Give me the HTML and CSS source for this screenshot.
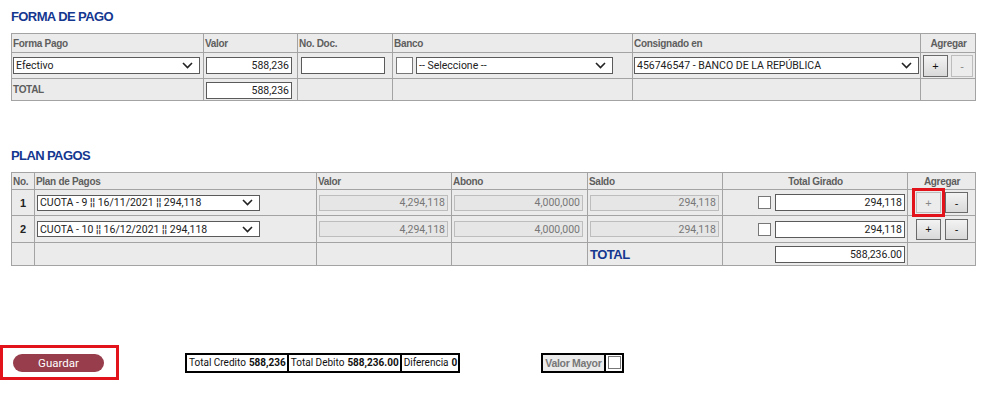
FILE: index.html
```html
<!DOCTYPE html>
<html lang="es">
<head>
<meta charset="utf-8">
<title>Forma de pago</title>
<link rel="stylesheet" href="styles.css">
</head>
<body>
<div class="page">
  <h2 class="title t1">FORMA DE PAGO</h2>
  <table class="grid g1">
    <colgroup>
      <col style="width:192px"><col style="width:94px"><col style="width:95px"><col style="width:240px"><col style="width:288px"><col style="width:55px">
    </colgroup>
    <tr class="hd">
      <th>Forma Pago</th><th>Valor</th><th>No. Doc.</th><th>Banco</th><th>Consignado en</th><th class="c">Agregar</th>
    </tr>
    <tr class="r1">
      <td><div class="sel w187"><span>Efectivo</span><svg width="11" height="7" viewBox="0 0 11 7"><path d="M1 1l4.5 4.5L10 1" fill="none" stroke="#222" stroke-width="1.6"/></svg></div></td>
      <td><input class="inp w85" value="588,236"></td>
      <td><input class="inp w83 left" value=""></td>
      <td><div class="bank"><span class="sq"></span><div class="sel w196"><span>-- Seleccione --</span><svg width="11" height="7" viewBox="0 0 11 7"><path d="M1 1l4.5 4.5L10 1" fill="none" stroke="#222" stroke-width="1.6"/></svg></div></div></td>
      <td><div class="sel w284"><span>456746547 - BANCO DE LA REPÚBLICA</span><svg width="11" height="7" viewBox="0 0 11 7"><path d="M1 1l4.5 4.5L10 1" fill="none" stroke="#222" stroke-width="1.6"/></svg></div></td>
      <td><div class="btns b1"><button class="btn">+</button><button class="btn dis">-</button></div></td>
    </tr>
    <tr class="tot">
      <th>TOTAL</th>
      <td><input class="inp w85" value="588,236"></td>
      <td></td><td></td><td></td><td></td>
    </tr>
  </table>

  <h2 class="title t2">PLAN PAGOS</h2>
  <table class="grid g2">
    <colgroup>
      <col style="width:23px"><col style="width:282px"><col style="width:135px"><col style="width:136px"><col style="width:135px"><col style="width:185px"><col style="width:68px">
    </colgroup>
    <tr class="hd">
      <th>No.</th><th>Plan de Pagos</th><th>Valor</th><th>Abono</th><th>Saldo</th><th class="c">Total Girado</th><th class="c">Agregar</th>
    </tr>
    <tr class="pr">
      <td class="num">1</td>
      <td><div class="sel w222"><span>CUOTA - 9 ¦¦ 16/11/2021 ¦¦ 294,118</span><svg width="11" height="7" viewBox="0 0 11 7"><path d="M1 1l4.5 4.5L10 1" fill="none" stroke="#222" stroke-width="1.6"/></svg></div></td>
      <td><input class="inp ro w128" value="4,294,118" readonly></td>
      <td><input class="inp ro w128" value="4,000,000" readonly></td>
      <td><input class="inp ro w128" value="294,118" readonly></td>
      <td><div class="girado"><span class="sq sm"></span><input class="inp w130" value="294,118"></div></td>
      <td><div class="btns b2"><button class="btn dis hl">+</button><button class="btn">-</button></div></td>
    </tr>
    <tr class="pr">
      <td class="num">2</td>
      <td><div class="sel w222"><span>CUOTA - 10 ¦¦ 16/12/2021 ¦¦ 294,118</span><svg width="11" height="7" viewBox="0 0 11 7"><path d="M1 1l4.5 4.5L10 1" fill="none" stroke="#222" stroke-width="1.6"/></svg></div></td>
      <td><input class="inp ro w128" value="4,294,118" readonly></td>
      <td><input class="inp ro w128" value="4,000,000" readonly></td>
      <td><input class="inp ro w128" value="294,118" readonly></td>
      <td><div class="girado"><span class="sq sm"></span><input class="inp w130" value="294,118"></div></td>
      <td><div class="btns b2"><button class="btn">+</button><button class="btn">-</button></div></td>
    </tr>
    <tr class="tot2">
      <td></td><td></td><td></td><td></td>
      <td class="bigtot">TOTAL</td>
      <td><div class="girado"><input class="inp w130" value="588,236.00"></div></td>
      <td></td>
    </tr>
  </table>

  <div class="footer">
    <div class="mark"><button class="save">Guardar</button></div>
    <div class="sums">
      <span>Total Credito <b>588,236</b></span>
      <span>Total Debito <b>588,236.00</b></span>
      <span>Diferencia <b>0</b></span>
    </div>
    <div class="mayor"><span class="lbl">Valor Mayor</span><span class="sq cb"></span></div>
  </div>
</div>
</body>
</html>
```

FILE: styles.css
```css
* { box-sizing: border-box; }
body {
  margin: 0;
  background: #fff;
  font-family: Roboto, "Liberation Sans", Arial, sans-serif;
  font-size: 11px;
  color: #222;
}
.page { padding-left: 11px; width: 993px; }
.title {
  margin: 0;
  font-family: "Liberation Sans", Arial, sans-serif;
  font-weight: bold;
  font-size: 13px;
  line-height: 16px;
  letter-spacing: -0.6px;
  color: #143790;
}
.t1 { padding-top: 9px; }
.t2 { margin-top: 47px; }
.grid {
  margin-top: 8px;
  border-collapse: collapse;
  table-layout: fixed;
  width: 965px;
  background: #ebebeb;
}
.grid th, .grid td {
  border: 1px solid #a3a3a3;
  padding: 0 0 0 1px;
  text-align: left;
  vertical-align: middle;
}
.grid th {
  font-family: "Liberation Sans", Arial, sans-serif;
  font-weight: bold;
  font-size: 10px;
  color: #5e5e5e;
  letter-spacing: -0.3px;
}
.grid th.c { text-align: center; }
.g1 .hd { height: 19px; }
.g1 .r1 { height: 26px; }
.g1 .tot { height: 22px; }
.g2 .hd { height: 17px; }
.g2 .pr { height: 26px; }
.g2 .pr + .pr { height: 27px; }
.g2 .tot2 { height: 23px; }
.tot th { color: #5e5e5e; vertical-align: top; padding-top: 5px; }
.tot td { vertical-align: bottom; padding-bottom: 1px; }

.sel {
  display: flex;
  align-items: center;
  justify-content: space-between;
  height: 17px;
  border: 1px solid #5a5a5a;
  background: #fff;
  padding: 0 6px 0 2px;
  font-size: 10.5px;
  color: #222;
  white-space: nowrap;
}
.w187 { width: 187px; }
.w196 { width: 197px; }
.w284 { width: 285px; }
.w222 { width: 223px; margin-left: 1px; height: 16px; }
.bank { display: flex; align-items: center; gap: 3px; padding-left: 2px; }
.sq {
  display: inline-block;
  width: 17px;
  height: 17px;
  border: 1px solid #777;
  background: #fff;
}
.sq.sm { width: 13px; height: 13px; }
.inp {
  height: 17px;
  border: 1px solid #5a5a5a;
  background: #fff;
  font-family: Roboto, "Liberation Sans", Arial, sans-serif;
  font-size: 10.5px;
  color: #222;
  text-align: right;
  padding: 0 2px;
  margin: 0 0 0 1px;
  display: block;
}
.inp.left { text-align: left; margin-left: 2px; }
.w85 { width: 86px; }
.w83 { width: 84px; }
.w128 { width: 129px; margin-left: 1px; }
.w130 { width: 130px; }
.inp.ro {
  background: #e6e6e6;
  border: 1px solid #bdbdbd;
  color: #777;
  height: 16px;
}
.girado {
  display: flex;
  align-items: center;
  justify-content: flex-end;
  gap: 3px;
  padding-right: 2px;
}
.btns { display: flex; align-items: center; }
.btn {
  width: 25px;
  height: 22px;
  padding: 0;
  margin: 0;
  border: 1px solid #6a6a6a;
  border-radius: 0;
  background: linear-gradient(#f3f3f3, #d9d9d9);
  font-family: "Liberation Sans", Arial, sans-serif;
  font-size: 11px;
  color: #111;
}
.btn.dis {
  border-color: #bdbdbd;
  background: #ececec;
  color: #888;
}
.b1 { gap: 3px; padding-left: 1px; }
.b1 .btn { width: 25px; height: 22px; }
.b1 .btn.dis { width: 22px; }
.b2 { gap: 4px; padding-left: 7px; }
.b2 .btn { width: 25px; height: 21px; }
.b2 .btn + .btn { width: 23px; }
.btn.hl { outline: 3px solid #e3131b; outline-offset: 1px; }
.num {
  text-align: center !important;
  font-weight: bold;
  font-family: "Liberation Sans", Arial, sans-serif;
  font-size: 11px;
  padding: 0 !important;
}
.bigtot {
  font-family: "Liberation Sans", Arial, sans-serif;
  font-weight: bold;
  font-size: 13px;
  letter-spacing: -0.5px;
  color: #143790;
  padding-left: 2px !important;
}

.footer {
  margin-top: 79px;
  margin-left: -11px;
  display: flex;
  align-items: center;
}
.mark {
  width: 119px;
  height: 35px;
  border: 3px solid #e3131b;
  display: flex;
  align-items: center;
  padding-left: 10px;
}
.save {
  width: 91px;
  height: 18px;
  border: none;
  border-radius: 9px;
  background: #983d4c;
  color: #fff;
  font-family: Roboto, "Liberation Sans", Arial, sans-serif;
  font-size: 11.5px;
  padding: 0;
}
.sums {
  margin-left: 66px;
  display: flex;
  border: 2px solid #000;
  height: 20px;
}
.sums span {
  display: flex;
  align-items: center;
  padding: 0 1px 0 2px;
  font-size: 10px;
  color: #111;
}
.sums span + span { border-left: 2px solid #000; }
.sums b { margin-left: 3px; }
.mayor {
  margin-left: 81px;
  display: flex;
  border: 2px solid #000;
  height: 20px;
}
.mayor .lbl {
  background: #ebebeb;
  font-family: "Liberation Sans", Arial, sans-serif;
  font-weight: bold;
  font-size: 10.5px;
  color: #777;
  letter-spacing: -0.3px;
  display: flex;
  align-items: center;
  padding: 0 2px;
  border-right: 2px solid #000;
}
.mayor .cb { width: 13px; height: 13px; margin: 1px 1px 0 2px; }
```
